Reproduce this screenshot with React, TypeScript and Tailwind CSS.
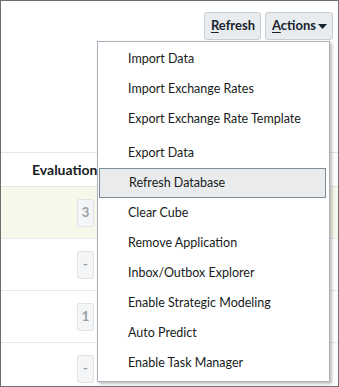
import React from 'react';

const groups: string[][] = [
  ['Import Data', 'Import Exchange Rates', 'Export Exchange Rate Template'],
  [
    'Export Data',
    'Refresh Database',
    'Clear Cube',
    'Remove Application',
    'Inbox/Outbox Explorer',
    'Enable Strategic Modeling',
    'Auto Predict',
    'Enable Task Manager',
  ],
];

const rows = [
  { value: '3', highlight: true },
  { value: '-', highlight: false },
  { value: '1', highlight: false },
  { value: '-', highlight: false },
];

function ToolbarButton({ label, accent, caret }: { label: string; accent: string; caret?: boolean }) {
  return (
    <button className="flex h-[28px] items-center gap-[2px] rounded-[3px] border border-[#c9ced3] bg-[#e8ecef] pl-[6px] pr-[5px] text-[13px] font-bold text-[#18232e]">
      <span>
        <span className="underline underline-offset-2">{accent}</span>
        {label}
      </span>
      {caret && (
        <svg width="9" height="5" viewBox="0 0 9 5" className="mt-[1px]">
          <path d="M0 0h9L4.5 5z" fill="#18232e" />
        </svg>
      )}
    </button>
  );
}

export default function App() {
  return (
    <div
      className="relative h-[387px] w-[339px] overflow-hidden border border-[#6e6e6e] bg-white"
      style={{ fontFamily: 'Lato, "Noto Sans", sans-serif' }}
    >
      <div className="flex justify-end gap-[4px] pr-[5px] pt-[11px]">
        <ToolbarButton accent="R" label="efresh" />
        <ToolbarButton accent="A" label="ctions" caret />
      </div>

      <div className="mt-[112px] border-t border-[#e3e6e9]">
        <div className="flex h-[34px] items-center border-b border-[#e3e6e9] pl-[31px] text-[14px] font-bold text-[#161b20]">
          Evaluation
        </div>
        {rows.map((r, i) => (
          <div
            key={i}
            className={`flex h-[52px] items-center justify-end border-b border-[#e6e8ea] pr-[244px] ${
              r.highlight ? 'bg-[#f8f8ea]' : 'bg-white'
            }`}
          >
            <span className="flex h-[28px] w-[17px] items-center justify-center rounded-[2px] border border-[#e1e4e7] bg-[#f3f5f6] text-[13px] font-bold text-[#9a9ea2]">
              {r.value}
            </span>
          </div>
        ))}
      </div>

      <div className="absolute left-[96px] top-[40px] h-[341px] w-[233px] border border-[#a9b2ba] bg-white pb-[4px] pt-[2px] shadow-[2px_2px_3px_rgba(0,0,0,0.25)]">
        {groups.map((g, gi) => (
          <div key={gi} className={gi > 0 ? 'mt-[4px]' : ''}>
            {g.map((item) => {
              const active = item === 'Refresh Database';
              return (
                <div
                  key={item}
                  className={`ml-[1px] mr-[3px] flex h-[30px] items-center pl-[29px] text-[12.5px] text-[#161b20] ${
                    active ? 'border border-[#7d8c99] bg-[#e9ebec] pl-[28px]' : ''
                  }`}
                >
                  {item}
                </div>
              );
            })}
          </div>
        ))}
      </div>
    </div>
  );
}
